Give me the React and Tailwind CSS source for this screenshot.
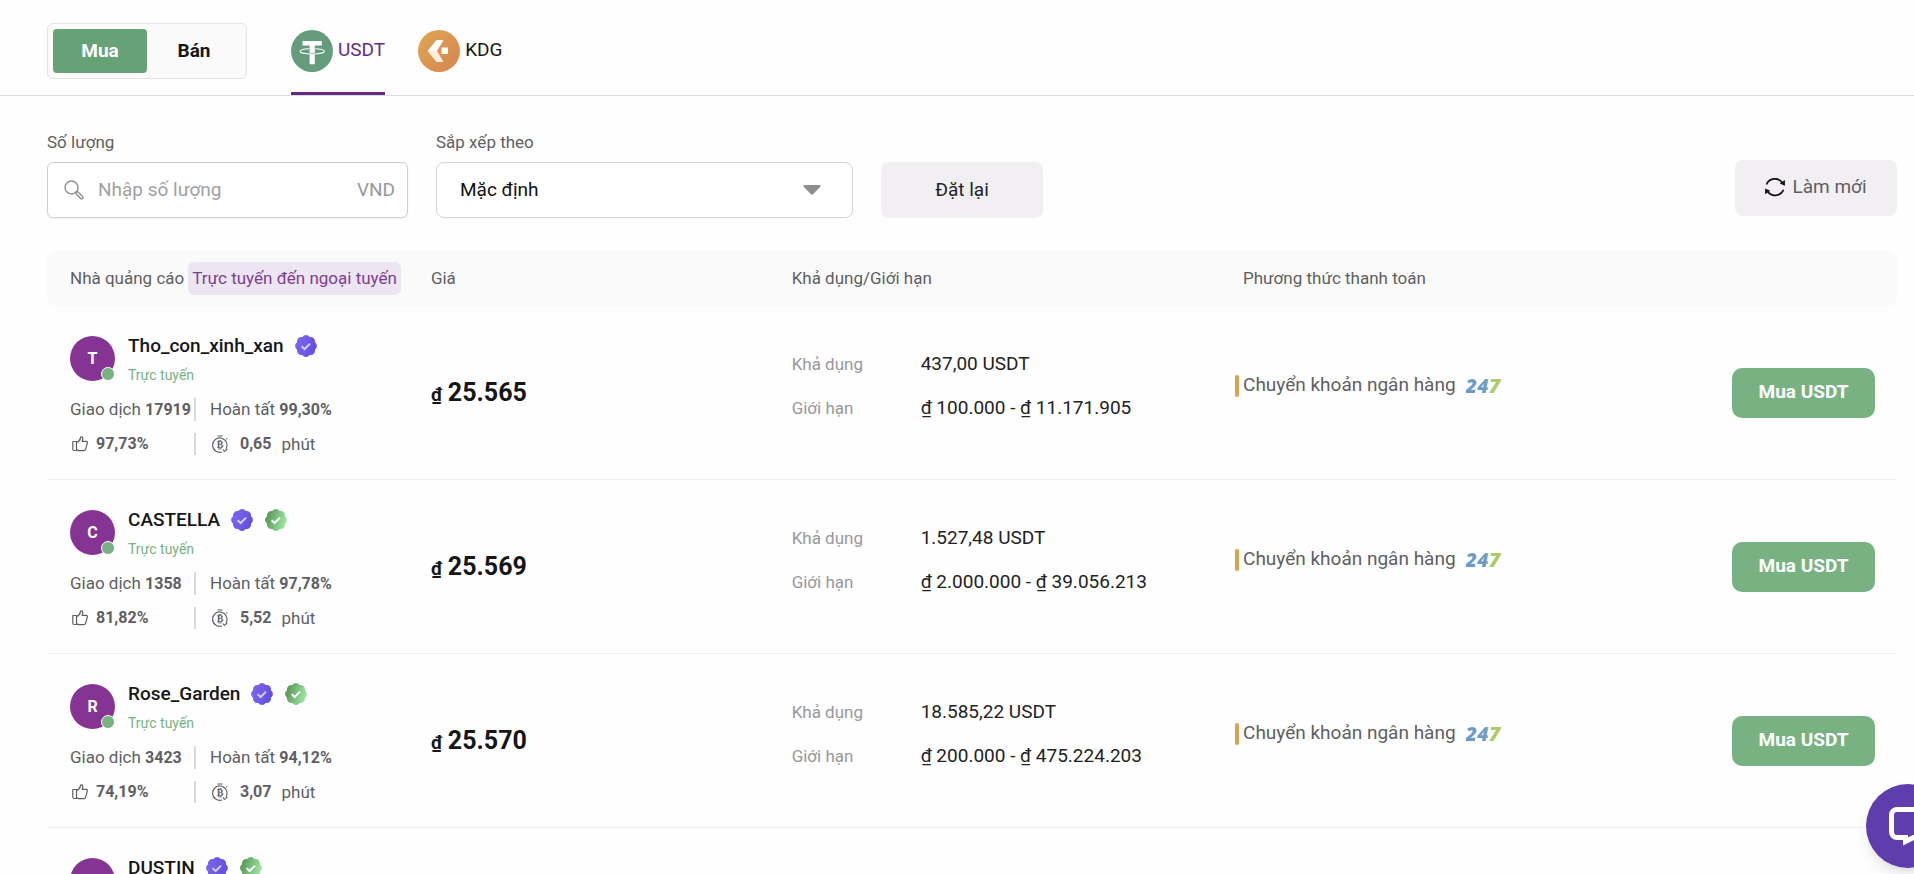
import React, { useState } from 'react';

const offers = [
  { name: 'Tho_con_xinh_xan', merchant: false, trades: '17919', done: '99,30%', likes: '97,73%', time: '0,65', price: '25.565', available: '437,00', min: '100.000', max: '11.171.905' },
  { name: 'CASTELLA', merchant: true, trades: '1358', done: '97,78%', likes: '81,82%', time: '5,52', price: '25.569', available: '1.527,48', min: '2.000.000', max: '39.056.213' },
  { name: 'Rose_Garden', merchant: true, trades: '3423', done: '94,12%', likes: '74,19%', time: '3,07', price: '25.570', available: '18.585,22', min: '200.000', max: '475.224.203' },
  { name: 'DUSTIN', merchant: true, trades: '2104', done: '95,40%', likes: '88,10%', time: '2,45', price: '25.572', available: '3.250,00', min: '500.000', max: '83.109.000' },
];

const TetherIcon = () => (
  <svg viewBox="0 0 42 42" className="size-[42px]" aria-hidden="true">
    <circle cx="21" cy="21" r="21" fill="#659c7c" />
    <path fill="#fff" d="M11.5 11h19.3v4.6h-7v18.6h-5.2V15.6h-7.1z" />
    <path d="M18.2 18.7c-5.2.2-9.2 1.3-9.2 2.6 0 1.5 5.4 2.7 12.2 2.7s12.200-1.200 12.200-2.700c0-1.300-4-2.400-9.200-2.600" fill="none" stroke="#fff" strokeWidth="1.1" />
    <path d="M18.6 23.4h5.2" stroke="#659c7c" strokeWidth="0.7" />
  </svg>
);

const KdgIcon = () => (
  <svg viewBox="0 0 42 42" className="size-[42px]" aria-hidden="true">
    <defs>
      <linearGradient id="kdg" x1="0" y1="0" x2="1" y2="1">
        <stop offset="0" stopColor="#dfa653" />
        <stop offset="1" stopColor="#d58550" />
      </linearGradient>
    </defs>
    <circle cx="21" cy="21" r="21" fill="url(#kdg)" />
    <path fill="#fff" d="M18.5 10h7L19 21H9.5z" />
    <path fill="#fdeedd" d="M9.5 21H19l6.5 11h-7z" />
    <path fill="#fff" d="M23.5 17.5h6.5v6.5h-6.5z" />
  </svg>
);

const SearchIcon = () => (
  <svg viewBox="0 0 20 20" className="size-5 shrink-0" fill="none" stroke="#8e8e93" strokeWidth="1.4" aria-hidden="true">
    <circle cx="7.5" cy="7.5" r="6.5" />
    <path d="M12.3 12.3l1-1 5.3 5.3a1.3 1.3 0 0 1-1.9 1.9l-4.700-4.800z" strokeLinejoin="round" />
  </svg>
);

const RefreshIcon = () => (
  <svg viewBox="0 0 20 20" className="size-5" aria-hidden="true">
    <path d="M1.5 7.5A9 8.8 0 0 1 17.6 6.2M18.5 12.8A9 8.8 0 0 1 2.4 14" fill="none" stroke="#111" strokeWidth="1.7" />
    <path d="M19.9 3v5.8l-5.2-2.3zM.1 17.200v-5.800l5.200 2.300z" fill="#111" />
  </svg>
);

const VerifiedBadge = ({ id, from, to, tick }) => (
  <svg viewBox="1 1 22 22" className="size-6 shrink-0" aria-hidden="true">
    <defs>
      <linearGradient id={id} x1="0" y1="0" x2="1" y2="0.3">
        <stop offset="0" stopColor={from} />
        <stop offset="1" stopColor={to} />
      </linearGradient>
    </defs>
    <path
      fill={`url(#${id})`}
      d="M3.85 8.62a4 4 0 0 1 4.78-4.77 4 4 0 0 1 6.74 0 4 4 0 0 1 4.78 4.78 4 4 0 0 1 0 6.74 4 4 0 0 1-4.77 4.78 4 4 0 0 1-6.75 0 4 4 0 0 1-4.78-4.77 4 4 0 0 1 0-6.76Z"
    />
    <path d="M8 12.2l2.7 2.6 5-5" fill="none" stroke={tick} strokeWidth="1.8" />
  </svg>
);

const ThumbIcon = () => (
  <svg viewBox="0 0 16 16" className="size-4 shrink-0" fill="none" stroke="#5f5f63" strokeWidth="1.2" strokeLinejoin="round" aria-hidden="true">
    <path d="M.8 5.5h3.7v9H2.3A1.5 1.5 0 0 1 .8 13z" />
    <path d="M4.5 6.8c2-1 3.6-2.6 3.9-4.900C8.600.6 10.700.5 10.800 2.400c0 1.200-.4 2.100-.7 2.900h4c1.100 0 1.500.9 1.200 1.900l-1.600 6c-.3.9-.9 1.400-1.900 1.400H6.500l-2-.7" />
  </svg>
);

const ReleaseTimeIcon = () => (
  <svg viewBox="0 0 16 18" className="h-[18px] w-4 shrink-0" fill="none" stroke="#5f5f63" strokeWidth="1.1" aria-hidden="true">
    <path d="M5.5 1h5M14.3 3.3l1 1M10 17A7.2 7.2 0 1 1 14 13.8" />
    <path d="M11 14.5l1.3 2 3-2.5" />
    <path d="M7 5v1.5M8.8 5v1.5M7 13v1.5M8.8 13v1.5" />
    <text x="8" y="13.2" textAnchor="middle" fontSize="10" fontWeight="700" fontFamily="Liberation Serif, serif" fill="#5f5f63" stroke="none">B</text>
  </svg>
);

const ChatIcon = () => (
  <svg viewBox="0 0 40 40" className="size-10" fill="none" stroke="#fff" strokeWidth="5" aria-hidden="true">
    <path d="M34 3.5H9A5.5 5.5 0 0 0 3.5 9v17A5.5 5.5 0 0 0 9 31.5h8.500v4l8-4H31a5.5 5.5 0 0 0 5.5-5.5V9" />
  </svg>
);

const OfferRow = ({ offer, index }) => (
  <tr className="align-middle">
    <td className="h-[174px] border-b border-[#efeff0] pl-[23px] align-top">
      <div className="flex gap-[13px] pt-[30px]">
        <div className="relative flex size-[45px] items-center justify-center rounded-full bg-[#863494] text-base font-bold text-white">
          {offer.name[0]}
          <span className="absolute right-0 bottom-0 size-[14px] rounded-full border border-white bg-[#78b283]" />
        </div>
        <div className="-mt-1">
          <div className="flex h-7 items-center gap-2.5 text-[19px] font-medium text-[#161618]">
            <span>{offer.name}</span>
            <VerifiedBadge id={`user-${index}`} from="#8169ee" to="#6350df" tick="#d5cdfb" />
            {offer.merchant && <VerifiedBadge id={`merchant-${index}`} from="#4b8a49" to="#9be3a0" tick="#fff" />}
          </div>
          <p className="mt-[5px] text-sm leading-5 text-[#78b283]">Trực tuyến</p>
        </div>
      </div>
      <div className="mt-[13px] grid w-[280px] grid-cols-[126px_1fr] gap-y-3 text-[17px] leading-[22px] text-[#5f5f63] [&_b]:text-base [&_b]:leading-[22px]">
        <p className="border-r-2 border-[#d9d9db] whitespace-nowrap">
          Giao dịch <b>{offer.trades}</b>
        </p>
        <p className="pl-3.5 whitespace-nowrap">
          Hoàn tất <b>{offer.done}</b>
        </p>
        <p className="flex items-center gap-2 border-r-2 border-[#d9d9db] pl-0.5">
          <ThumbIcon />
          <b>{offer.likes}</b>
        </p>
        <p className="flex items-center pl-4">
          <ReleaseTimeIcon />
          <b className="ml-3">{offer.time}</b>
          <span className="ml-2.5">phút</span>
        </p>
      </div>
    </td>
    <td className="border-b border-[#efeff0] font-bold text-[#161618]">
      <div className="flex items-baseline gap-1.5">
        <span className="text-[19px]">₫</span>
        <span className="text-[25px]">{offer.price}</span>
      </div>
    </td>
    <td className="border-b border-[#efeff0]">
      <dl className="grid grid-cols-[129px_1fr] items-center gap-y-4 pb-3.5 leading-7">
        <dt className="text-[17px] leading-7 text-[#98989b]">Khả dụng</dt>
        <dd className="text-[19px] leading-7 text-[#222224]">{offer.available} USDT</dd>
        <dt className="text-[17px] leading-7 text-[#98989b]">Giới hạn</dt>
        <dd className="text-[19px] leading-7 text-[#222224]">
          ₫ {offer.min} - ₫ {offer.max}
        </dd>
      </dl>
    </td>
    <td className="border-b border-[#efeff0]">
      <div className="-ml-2 flex items-center pb-3.5">
        <span className="mr-1 h-[22px] w-1 rounded-full bg-[#d5a351]" />
        <span className="text-[19px] text-[#5f5f63]">Chuyển khoản ngân hàng</span>
        <span className="ml-2.5 bg-linear-to-r from-[#6a9bcb] from-50% to-[#aecb68] to-65% bg-clip-text pr-1 font-['Open_Sans',sans-serif] text-xl leading-6 font-extrabold text-transparent italic">247</span>
      </div>
    </td>
    <td className="border-b border-[#efeff0] pr-[22px] text-right">
      <button type="button" className="h-[50px] w-[143px] rounded-[10px] bg-[#78b283] text-[19px] font-bold text-white">
        Mua USDT
      </button>
    </td>
  </tr>
);

const App = () => {
  const [side, setSide] = useState('buy');
  const [coin, setCoin] = useState('usdt');

  const sideClass = (value) =>
    side === value ? 'w-[94px] rounded bg-[#67a276] text-white' : 'w-[94px] rounded text-[#161618]';
  const coinClass = (value) =>
    coin === value
      ? 'flex items-center gap-[5px] border-b-[3px] border-[#662a82] pt-3 pb-[3px] text-[#662a82]'
      : 'flex items-center gap-[5px] border-b-[3px] border-transparent pt-3 pb-[3px] text-[#161618]';

  return (
    <div className="min-h-screen bg-[#fefefe] font-['Roboto',sans-serif]">
      {/* Buy / sell switch and coins */}
      <header className="flex h-24 border-b border-[#dcdcde] pl-[47px]">
        <div className="mt-[23px] flex h-14 rounded-md border border-[#e3e3e5] bg-[#fafafa] p-[5px] text-[19px] font-bold">
          <button type="button" className={sideClass('buy')} onClick={() => setSide('buy')}>Mua</button>
          <button type="button" className={sideClass('sell')} onClick={() => setSide('sell')}>Bán</button>
        </div>
        <nav className="ml-11 flex gap-[33px] text-[19px]">
          <button type="button" className={coinClass('usdt')} onClick={() => setCoin('usdt')}>
            <TetherIcon />
            USDT
          </button>
          <button type="button" className={coinClass('kdg')} onClick={() => setCoin('kdg')}>
            <KdgIcon />
            KDG
          </button>
        </nav>
      </header>

      <main className="pr-[17px] pl-[47px]">
        {/* Filters */}
        <form className="flex items-end pt-[34px]" onSubmit={(e) => e.preventDefault()}>
          <div className="w-[361px]">
            <label htmlFor="amount" className="block pb-2 text-[17px] leading-6 text-[#5f5f63]">Số lượng</label>
            <div className="flex h-14 items-center rounded-md border border-[#cfcfd3] bg-white pr-3 pl-4 shadow-xs">
              <SearchIcon />
              <input id="amount" type="text" placeholder="Nhập số lượng" className="ml-3.5 min-w-0 flex-1 text-[19px] outline-none placeholder:text-[#9f9fa3]" />
              <span className="text-[19px] text-[#98989b]">VND</span>
            </div>
          </div>
          <div className="ml-7 w-[417px]">
            <label htmlFor="sort" className="block pb-2 text-[17px] leading-6 text-[#5f5f63]">Sắp xếp theo</label>
            <div className="relative">
              <select id="sort" className="block h-14 w-full appearance-none rounded-lg border border-[#d4d4d7] bg-white pl-[23px] text-[19px] text-[#111] outline-none">
                <option>Mặc định</option>
              </select>
              <svg viewBox="0 0 18 10" className="pointer-events-none absolute top-[23px] right-8 h-2.5 w-[18px]" aria-hidden="true">
                <path d="M1.5 0h15c1 0 1.5 1 .8 1.700L10 9.300c-.6.7-1.400.7-2 0L.7 1.700C0 1 .5 0 1.500 0z" fill="#8e8e93" />
              </svg>
            </div>
          </div>
          <button type="reset" className="ml-7 h-14 w-[162px] rounded-lg bg-[#f1eff2] text-[19px] text-[#222224]">Đặt lại</button>
          <button type="button" className="mb-0.5 ml-auto flex h-14 w-[162px] items-center justify-center gap-[7px] rounded-lg bg-[#f1eff2] pb-0.5 text-[19px] text-[#5f5f63]">
            <RefreshIcon />
            Làm mới
          </button>
        </form>

        {/* Offers */}
        <table className="mt-[33px] w-full table-fixed border-separate border-spacing-0 text-left">
          <colgroup>
            <col className="w-[20.75%]" />
            <col className="w-[19.5%]" />
            <col className="w-[24.4%]" />
            <col className="w-[24.4%]" />
            <col />
          </colgroup>
          <thead>
            <tr className="h-[55px] bg-[#fafafa] text-[17px] text-[#5f5f63]">
              <th className="rounded-l-lg pl-[23px] font-normal whitespace-nowrap">
                Nhà quảng cáo
                <span className="ml-1 inline-block rounded-md bg-[#eee5f2] px-1 leading-[33px] text-[#7a3f8f]">Trực tuyến đến ngoại tuyến</span>
              </th>
              <th className="font-normal">Giá</th>
              <th className="font-normal">Khả dụng/Giới hạn</th>
              <th className="font-normal">Phương thức thanh toán</th>
              <th className="rounded-r-lg" />
            </tr>
          </thead>
          <tbody>
            {offers.map((offer, index) => (
              <OfferRow key={offer.name} offer={offer} index={index} />
            ))}
          </tbody>
        </table>
      </main>

      <button type="button" aria-label="Chat" className="fixed -right-9 bottom-1.5 flex size-[84px] items-center justify-center rounded-full bg-[#5f3dad] shadow-lg">
        <ChatIcon />
      </button>
    </div>
  );
};

export default App;
